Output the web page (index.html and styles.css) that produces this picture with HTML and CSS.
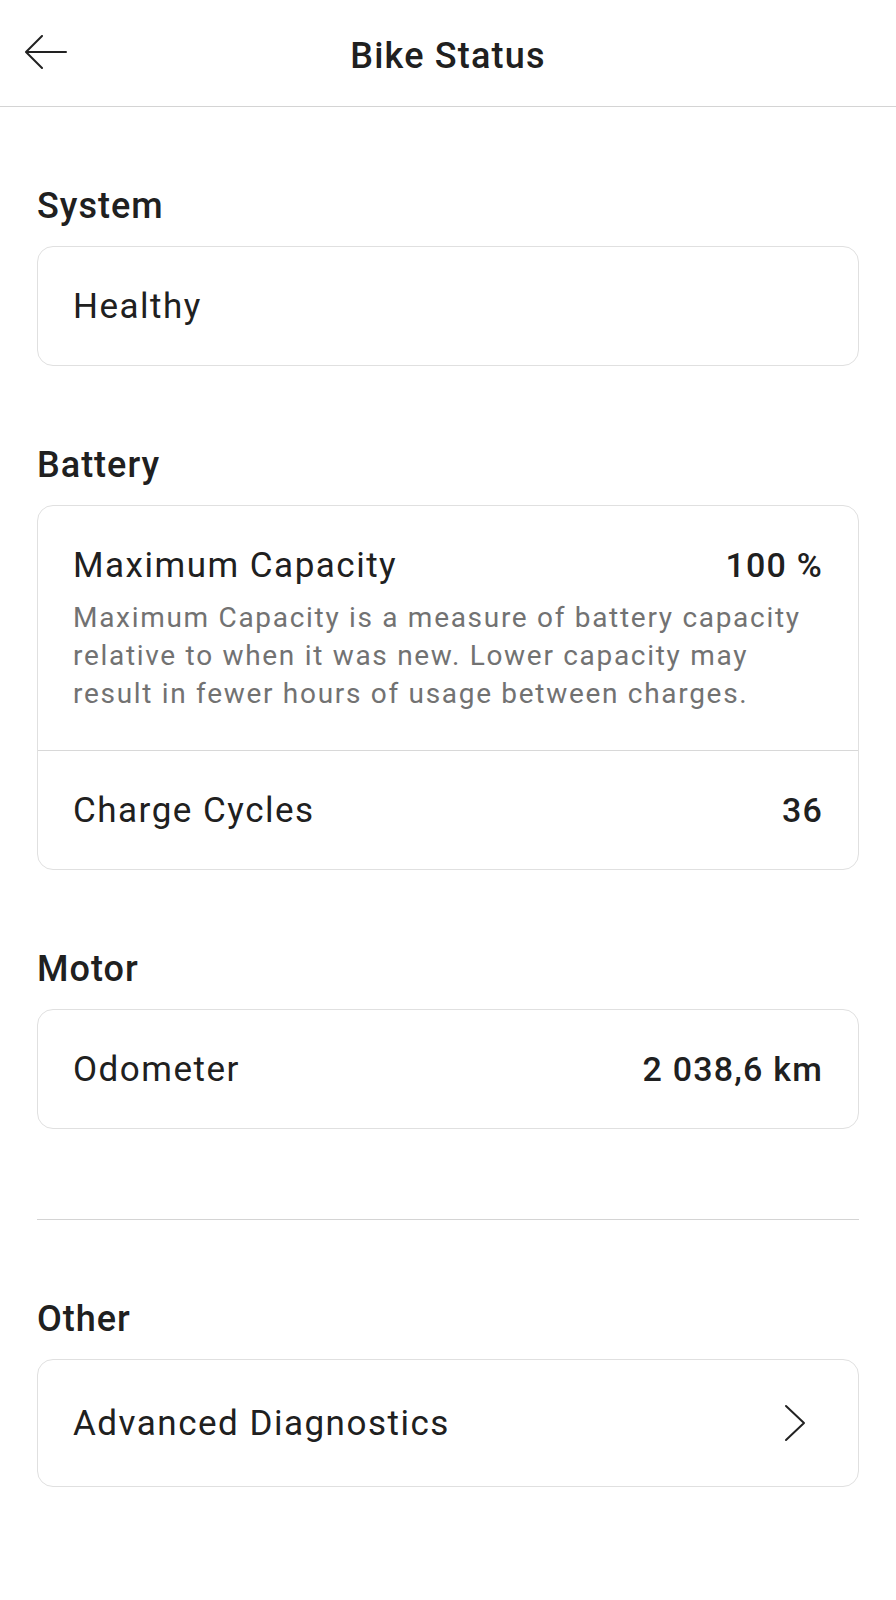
FILE: index.html
```html
<!DOCTYPE html>
<html lang="en">
<head>
<meta charset="UTF-8">
<meta name="viewport" content="width=device-width, initial-scale=1.0">
<title>Bike Status</title>
<link rel="stylesheet" href="styles.css">
</head>
<body>
<header class="topbar">
    <button class="back" aria-label="Back">
        <svg width="42" height="34" viewBox="0 0 42 34" fill="none" stroke="#222" stroke-width="2" stroke-linecap="round" stroke-linejoin="round">
            <path d="M41 17H2"/>
            <path d="M17 1L1 17l16 16"/>
        </svg>
    </button>
    <h1 class="title">Bike Status</h1>
</header>

<main class="content">
    <!-- System -->
    <section class="group">
        <h2 class="group-title">System</h2>
        <div class="card">
            <div class="row">
                <span class="label">Healthy</span>
            </div>
        </div>
    </section>

    <!-- Battery -->
    <section class="group">
        <h2 class="group-title">Battery</h2>
        <div class="card">
            <div class="row row-tall">
                <div class="row-head">
                    <span class="label">Maximum Capacity</span>
                    <span class="value">100 %</span>
                </div>
                <p class="note">Maximum Capacity is a measure of battery capacity relative to when it was new. Lower capacity may result in fewer hours of usage between charges.</p>
            </div>
            <div class="row">
                <span class="label">Charge Cycles</span>
                <span class="value">36</span>
            </div>
        </div>
    </section>

    <!-- Motor -->
    <section class="group">
        <h2 class="group-title">Motor</h2>
        <div class="card">
            <div class="row">
                <span class="label">Odometer</span>
                <span class="value">2 038,6 km</span>
            </div>
        </div>
    </section>

    <hr class="separator">

    <!-- Other -->
    <section class="group group-other">
        <h2 class="group-title">Other</h2>
        <div class="card">
            <a class="row row-link" href="#">
                <span class="label">Advanced Diagnostics</span>
                <svg class="chevron" width="24" height="38" viewBox="0 0 24 38" fill="none" stroke="#222" stroke-width="2" stroke-linecap="round" stroke-linejoin="round">
                    <path d="M3 2l18 17L3 36"/>
                </svg>
            </a>
        </div>
    </section>
</main>
</body>
</html>
```

FILE: styles.css
```css
body {
    margin: 0;
    font-family: Roboto, "Noto Sans", sans-serif;
    color: #202020;
    background-color: #fff;
}
.topbar {
    height: 101px;
    padding-top: 5px;
    border-bottom: 1px solid #d4d4d4;
    display: flex;
    align-items: center;
    justify-content: center;
    position: relative;
}
.back {
    position: absolute;
    left: 25px;
    top: 35px;
    padding: 0;
    border: none;
    background: none;
    cursor: pointer;
    line-height: 0;
}
.title {
    margin: 0;
    font-size: 36px;
    font-weight: 500;
    letter-spacing: 1.2px;
}
.content {
    padding: 0 37px 80px;
}
.group {
    margin-top: 77px;
}
.group-title {
    margin: 0 0 18px;
    font-size: 36px;
    line-height: 44px;
    font-weight: 500;
    letter-spacing: 1px;
}
.card {
    border: 1px solid #e0e0e0;
    border-radius: 16px;
}
.row {
    height: 118px;
    padding: 0 35px;
    display: flex;
    align-items: center;
    justify-content: space-between;
    color: inherit;
    text-decoration: none;
}
.row + .row {
    border-top: 1px solid #d8d8d8;
}
.row-tall {
    height: auto;
    display: block;
    padding: 37px 35px 37px;
}
.row-head {
    display: flex;
    justify-content: space-between;
    align-items: center;
    height: 44px;
}
.label {
    font-size: 35px;
    font-weight: 400;
    letter-spacing: 1.5px;
}
.value {
    font-size: 34px;
    font-weight: 500;
    letter-spacing: 1.2px;
}
.note {
    margin: 12px 0 0;
    font-size: 28px;
    line-height: 38px;
    color: #727272;
    letter-spacing: 1.7px;
}
.separator {
    margin: 90px 0 0;
    border: none;
    border-top: 1px solid #d4d4d4;
}
.group-other .row {
    height: 126px;
}
.chevron {
    margin-right: 16px;
}
```
